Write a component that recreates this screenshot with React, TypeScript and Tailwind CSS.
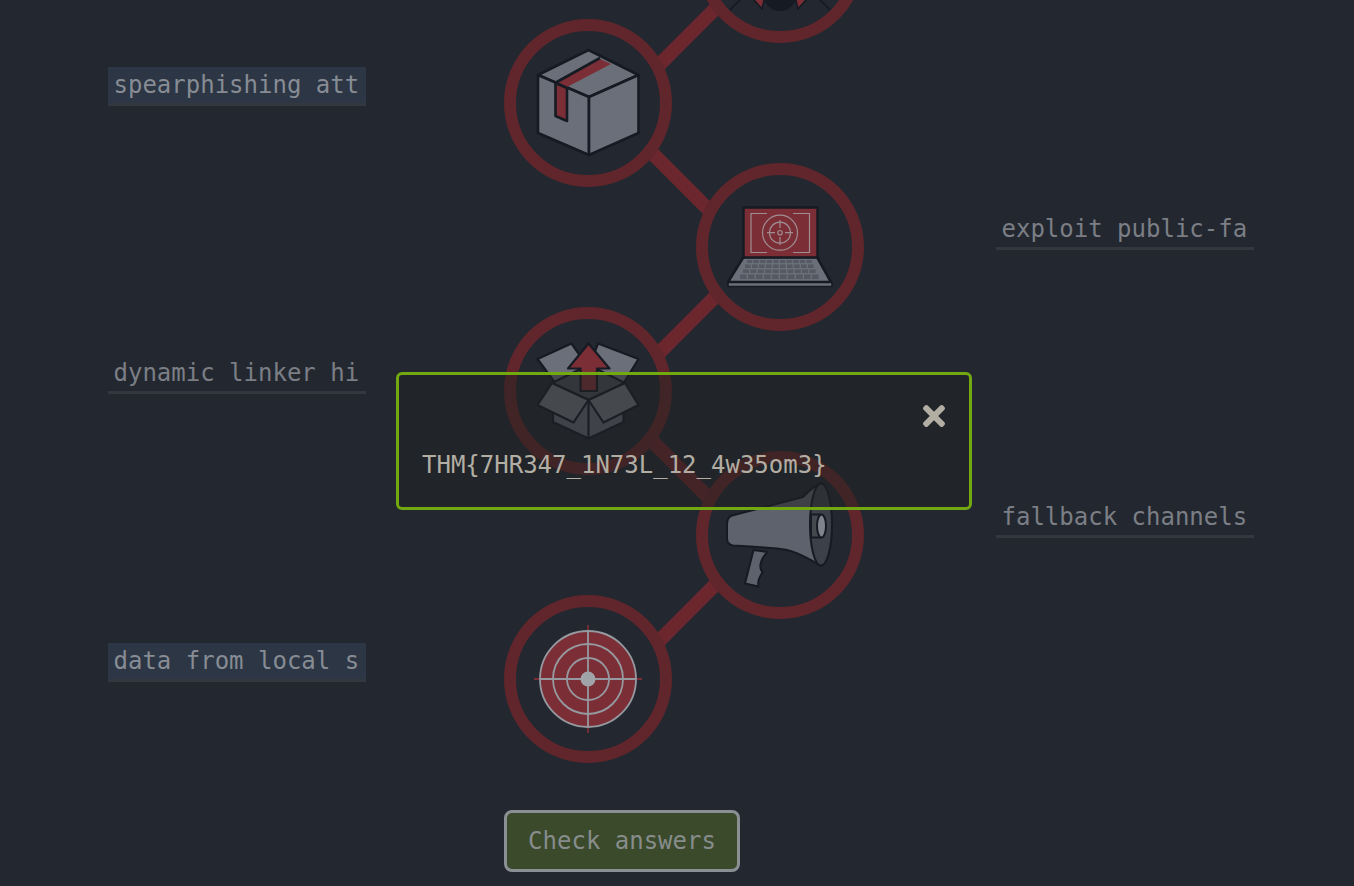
import type { ReactNode } from "react";
import { FaTimes } from "react-icons/fa";

const GREY = "#6a6f79";
const DARK = "#161a22";
const RED = "#7b2e36";
const LINE = "#969aa0";

function Icon({ box, children }: { box: string; children: ReactNode }) {
  return (
    <svg viewBox={box} className="h-36 w-36" strokeLinejoin="round">
      {children}
    </svg>
  );
}

function BatIcon() {
  return (
    <Icon box="708 -113 144 144">
      <g stroke={DARK} strokeWidth="1.6">
        <path d="M730 10Q738 0 750 -6" fill="none" />
        <path d="M830 10Q822 0 810 -6" fill="none" />
        <path d="M747 -8L766 -8L762 9Z" fill={RED} />
        <path d="M813 -8L794 -8L798 9Z" fill={RED} />
      </g>
      <circle cx="780" cy="-6" r="17" fill={DARK} />
    </Icon>
  );
}

function PackageIcon() {
  return (
    <Icon box="516 31 144 144">
      <g stroke={DARK} strokeWidth="2.6" fill={GREY}>
        <path d="M588.5 50L638.5 75L589 97L538 75Z" />
        <path d="M538 75L589 97V155L538 133Z" />
        <path d="M638.5 75L589 97V155L638.5 133Z" />
      </g>
      <path d="M558 82L600 59L611 64L567 87Z" fill={RED} />
      <path d="M555 83L600 58" fill="none" stroke={DARK} strokeWidth="2.6" />
      <path d="M555.5 83L567 88V121L555.5 116Z" fill={RED} stroke={DARK} strokeWidth="2.6" />
    </Icon>
  );
}

function LaptopIcon() {
  const rows = [
    { y: 260, h: 3, x0: 747, w: 66 },
    { y: 264.5, h: 3.5, x0: 745, w: 70 },
    { y: 269.5, h: 3.5, x0: 743, w: 74 },
    { y: 274.5, h: 4.5, x0: 740, w: 80 },
  ];
  return (
    <Icon box="708 175 144 144">
      <path d="M728 282L743.5 257H817L831 282Z" fill={GREY} stroke={DARK} strokeWidth="2.6" />
      <rect x="743.5" y="207.5" width="74" height="50" fill={RED} stroke={DARK} strokeWidth="2.4" />
      {rows.map((row) =>
        Array.from({ length: 10 }, (_, col) => (
          <rect
            key={`${row.y}-${col}`}
            x={row.x0 + (col * row.w) / 10}
            y={row.y}
            width={row.w / 10 - 1.4}
            height={row.h}
            fill="#555962"
          />
        )),
      )}
      <rect x="728" y="282.5" width="104" height="4" fill={GREY} stroke={DARK} strokeWidth="1.6" />
      <g fill="none" stroke="#a08d91" strokeWidth="1.2">
        <path d="M767 213.5H751V252.5H767M793 213.5H809.5V252.5H793" />
        <circle cx="780" cy="232.7" r="17.5" />
        <circle cx="780" cy="232.7" r="10.5" />
        <circle cx="780" cy="232.7" r="2.2" />
        <path d="M780 220V228M780 237V245M767 232.7H775M785 232.7H793" />
      </g>
    </Icon>
  );
}

function OpenBoxIcon() {
  return (
    <Icon box="516 319 144 144">
      <g stroke={DARK} strokeWidth="2.2" fill={GREY}>
        <path d="M537.5 359L571.5 343.5L590 370L556 384Z" />
        <path d="M638.5 359L598 343.5L588 370L623 384Z" />
        <path d="M552 383L588.5 365L625 383L588.5 400Z" fill="#474c55" />
        <path d="M553 405V422L588.5 438.5L623.5 422V405L588.5 400Z" fill="#5e6470" />
        <path d="M588.5 400V438.5" fill="none" />
        <path d="M552 383L588.5 400L573.5 422.5L537.5 405Z" />
        <path d="M625 383L588.5 400L603.5 422.5L638.5 405Z" />
      </g>
      <path
        d="M588.5 343.5L609.5 368.5H597V391H580.5V368.5H568Z"
        fill={RED}
        stroke={DARK}
        strokeWidth="2.2"
      />
    </Icon>
  );
}

function MegaphoneIcon() {
  return (
    <Icon box="708 463 144 144">
      <g stroke={DARK} strokeWidth="2" fill="#5d626c">
        <path d="M753.5 550L745 583.5L758.5 586.5C757.5 581 759 578.5 762.5 572C759 568 759 562 767 552Z" />
        <path d="M821 483.5C812 487 808 492 803 497L732 515.5C728 517 727 520 727 524V538C727 543 729 545 733 545.5C760 547 775 548 787 550C800 553 808 559 821 565.5Z" />
        <ellipse cx="821" cy="524.5" rx="11" ry="41" fill="#3c4049" />
        <path d="M811 514.5H821V537.5H811Z" fill="#44484f" />
        <ellipse cx="821.5" cy="526" rx="4.5" ry="11.5" fill="#7f838b" />
      </g>
    </Icon>
  );
}

function TargetIcon() {
  return (
    <Icon box="516 607 144 144">
      <path d="M534 679H642M588 625V733" stroke={RED} strokeWidth="1.8" />
      <circle cx="588" cy="679" r="48" fill={RED} stroke={LINE} strokeWidth="1.8" />
      <g fill="none" stroke={LINE} strokeWidth="1.8">
        <circle cx="588" cy="679" r="35" />
        <circle cx="588" cy="679" r="21" />
        <path d="M540 679H636M588 631V727" />
      </g>
      <circle cx="588" cy="679" r="7.5" fill="#a0a4a9" />
    </Icon>
  );
}

type Step = {
  side: "left" | "right";
  label?: string;
  picked?: boolean;
  icon: ReactNode;
};

const steps: Step[] = [
  { side: "right", icon: <BatIcon /> },
  { side: "left", label: "spearphishing attachment", picked: true, icon: <PackageIcon /> },
  { side: "right", label: "exploit public-facing application", icon: <LaptopIcon /> },
  { side: "left", label: "dynamic linker hijacking", icon: <OpenBoxIcon /> },
  { side: "right", label: "fallback channels", icon: <MegaphoneIcon /> },
  { side: "left", label: "data from local system", picked: true, icon: <TargetIcon /> },
];

function Label({ text, picked, className }: { text: string; picked?: boolean; className: string }) {
  return (
    <div
      className={[
        "mt-9 h-[39px] self-start border-b-[3px] border-[#33383f] pl-[5.5px] pr-1.5 text-2xl leading-9",
        picked ? "bg-[#2c3644] text-[#878c94]" : "text-[#7b7e85]",
        className,
      ].join(" ")}
    >
      <div className="overflow-hidden whitespace-nowrap">{text}</div>
    </div>
  );
}

export default function App() {
  return (
    <div className="relative h-[886px] overflow-hidden bg-[#232830] font-['DejaVu_Sans_Mono',monospace]">
      <div className="-mt-[113px] pl-[108px]">
        {steps.map((step, index) => (
          <div
            key={index}
            className="grid h-36 grid-cols-[258px_138px_168px_24px_168px_132px_258px] [grid-template-rows:144px]"
          >
            {step.label && step.side === "left" ? (
              <Label text={step.label} picked={step.picked} className="col-start-1 row-start-1" />
            ) : null}

            <div
              className={[
                "relative z-10 row-start-1 -my-3 flex h-[168px] w-[168px] items-center justify-center rounded-full border-12 border-[#60262b] bg-[#232830]",
                step.side === "left" ? "col-start-3" : "col-start-5",
              ].join(" ")}
            >
              {step.icon}
            </div>

            {index < steps.length - 1 ? (
              <div className="relative col-start-4 row-start-1">
                <div
                  className={[
                    "absolute h-[14px] w-24 -translate-x-1/2 -translate-y-1/2 bg-[#6b262e]",
                    index % 2 === 0
                      ? "left-[calc(50%+4px)] top-[calc(100%+5px)] -rotate-45"
                      : "left-[calc(50%-5px)] top-[calc(100%+5px)] rotate-45",
                  ].join(" ")}
                />
              </div>
            ) : null}

            {step.label && step.side === "right" ? (
              <Label text={step.label} picked={step.picked} className="col-start-7 row-start-1" />
            ) : null}
          </div>
        ))}

        <button className="ml-[396px] mt-[59px] h-[62px] w-[236px] rounded-lg border-[3px] border-[#8a8f94] bg-[#3a4a2b] text-2xl text-[#878c8c]">
          Check answers
        </button>
      </div>

      <div className="absolute left-[396px] top-[372px] z-20 h-[138px] w-[576px] rounded-md border-[3px] border-[#72a810] bg-[#202121]/50 pl-[23px] pr-6 pt-[25px] text-[#b3aea4]">
        <div className="flex justify-end">
          <FaTimes className="h-8 w-[22px]" />
        </div>
        <p className="mt-[15px] text-2xl leading-9">THM{"{7HR347_1N73L_12_4w35om3}"}</p>
      </div>
    </div>
  );
}
